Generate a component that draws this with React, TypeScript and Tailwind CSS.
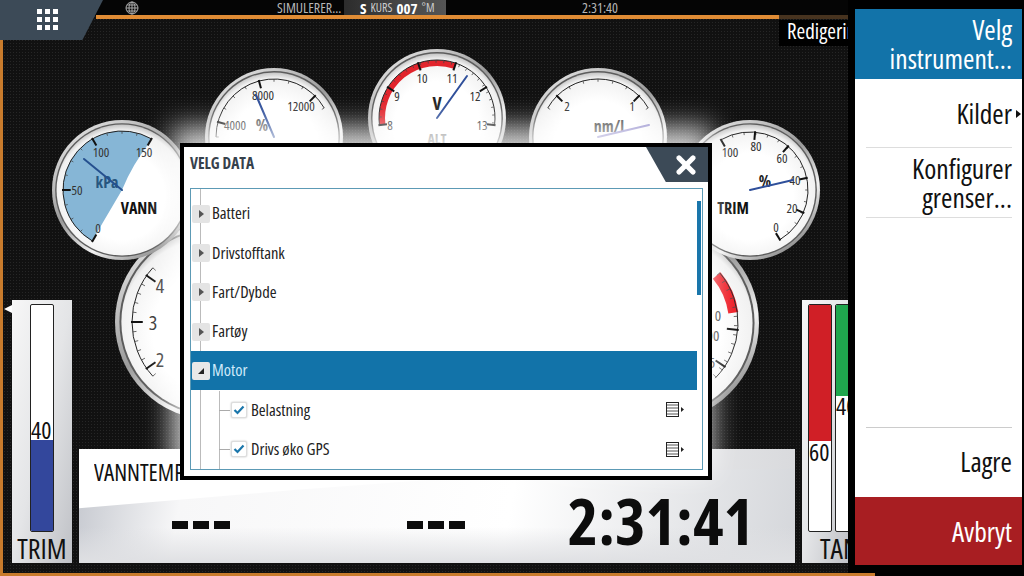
import React from "react";
import { X } from "lucide-react";

const polar = (cx: number, cy: number, r: number, deg: number): [number, number] => {
    const rad = (deg * Math.PI) / 180;
    return [cx + r * Math.sin(rad), cy - r * Math.cos(rad)];
};

const arcPath = (cx: number, cy: number, r: number, from: number, to: number): string => {
    const [x1, y1] = polar(cx, cy, r, from);
    const [x2, y2] = polar(cx, cy, r, to);
    return `M${x1} ${y1}A${r} ${r} 0 ${to - from > 180 ? 1 : 0} 1 ${x2} ${y2}`;
};

interface Label {
    x: number;
    y: number;
    text: string;
    size?: number;
    bold?: boolean;
    fill?: string;
}

interface GaugeProps {
    id: string;
    className: string;
    cx: number;
    cy: number;
    r: number;
    ring: number;
    from: number;
    to: number;
    majors: number[];
    step: number;
    labels: Label[];
    needle?: [number, number];
    needleColor?: string;
    children?: React.ReactNode;
}

function Gauge({ id, className, cx, cy, r, ring, from, to, majors, step, labels, needle, needleColor = "#2f4f9a", children }: GaugeProps) {
    const minors: number[] = [];
    for (let a = from; a <= to; a += step) minors.push(a);
    return (
        <svg
            className={`absolute ${className}`}
            width={r * 2}
            height={r * 2}
            viewBox={`${cx - r} ${cy - r} ${r * 2} ${r * 2}`}
        >
            <defs>
                <linearGradient id={`${id}-bezel`} x1="0.15" y1="0" x2="0.85" y2="1">
                    <stop offset="0" stopColor="#e8e8e8" />
                    <stop offset="0.45" stopColor="#9a9a9a" />
                    <stop offset="0.7" stopColor="#f2f2f2" />
                    <stop offset="1" stopColor="#6c6c6c" />
                </linearGradient>
                <radialGradient id={`${id}-face`} cx="0.5" cy="0.55" r="0.55">
                    <stop offset="0.6" stopColor="#ffffff" />
                    <stop offset="0.92" stopColor="#f1f1f1" />
                    <stop offset="1" stopColor="#c4c4c4" />
                </radialGradient>
            </defs>
            <circle cx={cx} cy={cy} r={r} fill={`url(#${id}-bezel)`} />
            <circle cx={cx} cy={cy} r={r * 0.955} fill="#5c5c5c" />
            <circle cx={cx} cy={cy} r={r * 0.935} fill={`url(#${id}-face)`} />
            {children}
            <path d={arcPath(cx, cy, ring, from, to)} fill="none" stroke="#222" strokeWidth="1" />
            {minors.map((a) => {
                const [x1, y1] = polar(cx, cy, ring, a);
                const [x2, y2] = polar(cx, cy, ring - r * 0.04, a);
                return <line key={a} x1={x1} y1={y1} x2={x2} y2={y2} stroke="#444" strokeWidth="0.8" />;
            })}
            {majors.map((a) => {
                const [x1, y1] = polar(cx, cy, ring + 1, a);
                const [x2, y2] = polar(cx, cy, ring - r * 0.11, a);
                return <line key={a} x1={x1} y1={y1} x2={x2} y2={y2} stroke="#111" strokeWidth="2" />;
            })}
            {labels.map((l) => (
                <text
                    key={l.text}
                    x={l.x}
                    y={l.y}
                    textAnchor="middle"
                    dominantBaseline="central"
                    fontSize={l.size ?? 13}
                    fontWeight={l.bold ? 700 : 400}
                    fill={l.fill ?? "#333"}
                    className="[font-stretch:condensed]"
                >
                    {l.text}
                </text>
            ))}
            {needle && (
                <line x1={cx} y1={cy} x2={needle[0]} y2={needle[1]} stroke={needleColor} strokeWidth="2" strokeLinecap="round" />
            )}
        </svg>
    );
}

function Gauges() {
    return (
        <>
            <Gauge id="big-left" className="left-[115px] top-[204px]" cx={213} cy={322} r={98} ring={81} from={-132} to={-48} majors={[-125, -90, -55]} step={7}
                labels={[
                    { x: 160, y: 285, text: "4", size: 20 },
                    { x: 153, y: 322, text: "3", size: 20 },
                    { x: 160, y: 359, text: "2", size: 20 },
                ]}
            />
            <Gauge id="big-right" className="left-[561px] top-[204px]" cx={660} cy={322} r={99} ring={78} from={50} to={135} majors={[95, 124]} step={7}
                labels={[
                    { x: 718, y: 314, text: "0", size: 15 },
                    { x: 713, y: 334, text: "00", size: 15 },
                    { x: 712, y: 361, text: "5", size: 15 },
                ]}
            >
                <path d={arcPath(660, 322, 74, 50, 82)} fill="none" stroke="#ee1c25" strokeWidth="10" />
            </Gauge>
            <Gauge id="vann" className="left-[52px] top-[100px]" cx={122} cy={190} r={70} ring={59} from={-150} to={30} majors={[-150, -90, -30, 30]} step={15}
                labels={[
                    { x: 101, y: 152, text: "100" },
                    { x: 144, y: 152, text: "150" },
                    { x: 77, y: 190, text: "50" },
                    { x: 98, y: 228, text: "0" },
                    { x: 107, y: 182, text: "kPa", size: 16, bold: true, fill: "#27567f" },
                    { x: 139, y: 208, text: "VANN", size: 16, bold: true, fill: "#111" },
                ]}
                needle={[84, 159]}
                needleColor="#25508f"
            >
                <path d="M122 190L92 241A59 59 0 0 1 152 139Q132 165 122 190Z" fill="#86b6d6" />
            </Gauge>
            <Gauge id="pct" className="left-[205px] top-[48px]" cx={274} cy={137} r={69} ring={58} from={-90} to={60} majors={[-75, -15, 45]} step={15}
                labels={[
                    { x: 235, y: 125, text: "4000" },
                    { x: 263, y: 95, text: "8000" },
                    { x: 301, y: 106, text: "12000" },
                    { x: 262, y: 125, text: "%", size: 16, bold: true, fill: "#555" },
                ]}
                needle={[256, 95]}
            />
            <Gauge id="volt" className="left-[368px] top-[29px]" cx={437} cy={118} r={69} ring={58} from={-97} to={97} majors={[-97, -58, -19, 19, 58, 97]} step={8}
                labels={[
                    { x: 390, y: 125, text: "8" },
                    { x: 397, y: 96, text: "9" },
                    { x: 422, y: 78, text: "10" },
                    { x: 452, y: 78, text: "11" },
                    { x: 475, y: 96, text: "12" },
                    { x: 482, y: 125, text: "13" },
                    { x: 437, y: 103, text: "V", size: 18, bold: true, fill: "#222" },
                    { x: 437, y: 138, text: "ALT", size: 14, bold: true, fill: "#777" },
                ]}
                needle={[467, 76]}
            >
                <path d={arcPath(437, 118, 55, -97, 19)} fill="none" stroke="#e2242c" strokeWidth="6" />
            </Gauge>
            <Gauge id="nml" className="left-[529px] top-[48px]" cx={598} cy={137} r={69} ring={58} from={-60} to={60} majors={[-45, 45]} step={15}
                labels={[
                    { x: 567, y: 106, text: "2" },
                    { x: 632, y: 106, text: "1" },
                    { x: 609, y: 126, text: "nm/l", size: 16, bold: true, fill: "#444" },
                ]}
                needle={[649, 125]}
                needleColor="#8d87c9"
            />
            <Gauge id="trim" className="left-[680px] top-[100px]" cx={750} cy={190} r={70} ring={58} from={-30} to={149} majors={[-30, 5, 41, 78, 113, 149]} step={12}
                labels={[
                    { x: 730, y: 152, text: "100" },
                    { x: 756, y: 146, text: "80" },
                    { x: 782, y: 158, text: "60" },
                    { x: 795, y: 180, text: "40" },
                    { x: 792, y: 208, text: "20" },
                    { x: 776, y: 227, text: "0" },
                    { x: 765, y: 181, text: "%", size: 16, bold: true, fill: "#222" },
                    { x: 733, y: 208, text: "TRIM", size: 16, bold: true, fill: "#111" },
                ]}
                needle={[793, 180]}
            />
        </>
    );
}

function TopBar() {
    return (
        <div className="relative h-5 shrink-0 text-[11px] leading-none">
            <div className="absolute left-0 top-0 w-[103px] h-10 z-10 bg-[#3c4a57] [clip-path:polygon(0_0,100%_0,80%_100%,0_100%)] flex items-center pl-[37px] pb-[1px]">
                <div className="grid grid-cols-3 gap-[3px]">
                    {[...Array(9)].map((_, i) => <span key={i} className="w-[5px] h-[5px] bg-white" />)}
                </div>
            </div>
            <div className="h-4 flex items-center pl-[125px] bg-[#050505]">
                <svg width="14" height="14" viewBox="0 0 14 14" fill="none" stroke="#aaa" strokeWidth="1">
                    <circle cx="7" cy="7" r="6" />
                    <ellipse cx="7" cy="7" rx="3" ry="6" />
                    <path d="M1 7h12M2 4h10M2 10h10M7 1v12" />
                </svg>
                <span className="ml-[138px] w-[67px] text-[#b5b5b5] text-[14px] whitespace-nowrap">SIMULERER...</span>
                <div className="w-[102px] h-4 bg-gradient-to-r from-[#2c2c2c] via-[#444] to-[#555] text-white flex items-center pl-4 gap-1">
                    <span className="font-bold text-[15px]">S</span>
                    <span className="text-[12px] text-[#ccc]">KURS</span>
                    <span className="font-bold text-[15px]">007</span>
                    <span className="text-[12px] text-[#ccc]">°M</span>
                </div>
                <span className="ml-[136px] text-[#b5b5b5] text-[14px]">2:31:40</span>
            </div>
            <div className="flex h-1 ml-[96px] -mt-[1px]">
                <div className="w-[683px] bg-[#e08c35]" />
                <div className="flex-1 bg-[#47331f]" />
            </div>
        </div>
    );
}

function BarPanel({ children, label, className, labelClass }: { children: React.ReactNode; label: string; className: string; labelClass: string }) {
    return (
        <div className={`relative h-[263px] shrink-0 overflow-hidden bg-gradient-to-br from-[#f7f7f7] via-[#e4e5e7] to-[#bfc1c6] ${className}`}>
            {children}
            <p className={`absolute left-0 right-0 bottom-0 text-[28px] leading-[30px] text-[#111] whitespace-nowrap ${labelClass}`}>{label}</p>
        </div>
    );
}

const Bar = ({ color, fillClass, valueClass, value, left }: { color: string; fillClass: string; valueClass: string; value: string; left: string }) => (
    <div className={`absolute top-[4px] h-[228px] w-[24px] border border-[#222] rounded-[2px] bg-white overflow-hidden ${left}`}>
        <div className={`absolute left-0 right-0 ${color} ${fillClass}`} />
        <span className={`absolute left-0 text-[24px] leading-6 text-[#111] ${valueClass}`}>{value}</span>
    </div>
);

function BottomRow() {
    return (
        <div className="relative mt-auto mb-[13px] flex gap-[7px] pl-[12px]">
            <div className="relative">
                <BarPanel label="TRIM" className="w-[60px]" labelClass="text-center">
                    <Bar color="bg-[#33479c]" fillClass="bottom-0 h-[91px]" valueClass="top-[113px]" value="40" left="left-[18px]" />
                </BarPanel>
                <div className="absolute -left-[8px] top-[5px] w-2 h-[8px] bg-white [clip-path:polygon(100%_0,100%_100%,0_50%)]" />
            </div>
            <div className="relative self-end w-[716px] h-[114px] overflow-hidden bg-gradient-to-r from-white via-white to-[#d9dadd]">
                <div className="absolute inset-0 bg-[linear-gradient(100deg,#c4c7ce_0%,#f7f7f8_15%,#ffffff_60%,#d5d7db_100%)] [clip-path:polygon(0_52%,30%_36%,60%_22%,100%_17%,100%_100%,0_100%)]" />
                <div className="absolute inset-x-0 bottom-0 h-[36px] bg-gradient-to-t from-[#dfe0e3] to-transparent" />
                <p className="absolute z-30 left-[15px] top-[9px] w-[86px] overflow-hidden whitespace-nowrap text-[23px] leading-7 text-[#111] [font-stretch:87.5%]">VANNTEMP</p>
                <div className="absolute left-[93px] top-[72px] flex gap-[5px]">
                    {[0, 1, 2].map((i) => <span key={i} className="w-4 h-2 bg-[#0c0c0c]" />)}
                </div>
                <div className="absolute left-[328px] top-[72px] flex gap-[5px]">
                    {[0, 1, 2].map((i) => <span key={i} className="w-4 h-2 bg-[#0c0c0c]" />)}
                </div>
                <p className="absolute right-[41px] top-[35px] text-[65px] leading-[72px] font-bold text-[#0c0c0c]">2:31:41</p>
            </div>
            <BarPanel label="TANK" className="w-[46px]" labelClass="pl-[18px]">
                <Bar color="bg-[#d01f26]" fillClass="top-0 h-[136px]" valueClass="top-[135px]" value="60" left="left-[6px]" />
                <Bar color="bg-[#1fa64e]" fillClass="top-0 h-[91px]" valueClass="top-[89px]" value="40" left="left-[33px]" />
            </BarPanel>
        </div>
    );
}

function Row({ label }: { label: string }) {
    return (
        <div className="h-[39.3px] flex items-center">
            <button className="w-[18px] h-[18px] ml-[1px] bg-[#e4e4e4] rounded-[2px] flex items-center justify-center">
                <span className="border-y-[4px] border-y-transparent border-l-[5px] border-l-[#555]" />
            </button>
            <span className="ml-[2px] text-[16.5px] text-[#222]">{label}</span>
        </div>
    );
}

function SubRow({ label }: { label: string }) {
    return (
        <div className="h-[39.3px] flex items-center relative">
            <span className="ml-[28px] w-[11px] h-px bg-[#aaa]" />
            <span className="ml-[1px] w-4 h-4 border border-[#ddd] rounded-[2px] shadow-[0_0_2px_#bbb] flex items-center justify-center bg-white">
                <svg width="12" height="10" viewBox="0 0 12 10" fill="none" stroke="#1a76ab" strokeWidth="2.2">
                    <path d="M1.5 5l3 3 6-6.5" />
                </svg>
            </span>
            <span className="ml-[4px] text-[16.5px] text-[#222]">{label}</span>
            <svg className="absolute left-[475px] top-[12px]" width="20" height="15" viewBox="0 0 20 15">
                <rect x="0.5" y="0.5" width="12" height="14" fill="#fff" stroke="#222" />
                <path d="M1 3h11M1 6h11M1 9h11M1 12h11" stroke="#555" />
                <path d="M15 5l3 2.5-3 2.5z" fill="#222" />
            </svg>
        </div>
    );
}

function Dialog() {
    return (
        <div className="absolute left-[180px] top-[143px] w-[532px] h-[337px] z-20 bg-white border-[4px] border-black shadow-[-4px_-12px_26px_4px_rgba(255,255,255,0.8)]">
            <div className="absolute right-0 top-0 w-[62px] h-[35px] bg-[#3c4a57] [clip-path:polygon(0_0,100%_0,100%_100%,32%_100%)] flex items-center justify-end pr-[8px]">
                <X size={28} strokeWidth={4.5} color="#fff" />
            </div>
            <p className="absolute left-[6px] top-[6px] text-[15.5px] leading-5 font-bold text-[#36414c]">VELG DATA</p>
            <div className="absolute left-[6px] top-[41px] w-[513px] h-[282px] border border-[#5c9ab5] overflow-hidden">
                <div className="absolute left-[9px] top-0 bottom-0 w-px bg-[#bbb]" />
                <div className="absolute left-[28px] top-[202px] bottom-0 w-px bg-[#bbb]" />
                <div className="absolute right-[1px] top-[12px] w-[4px] h-[94px] bg-[#1a76ab]" />
                <div className="relative pt-[5px]">
                    <Row label="Batteri" />
                    <Row label="Drivstofftank" />
                    <Row label="Fart/Dybde" />
                    <Row label="Fartøy" />
                    <div className="h-[39.3px] w-[506px] bg-[#1273a9] flex items-center">
                        <button className="w-[18px] h-[18px] ml-[1px] bg-[#e8e8e8] rounded-[2px] flex items-center justify-center">
                            <span className="w-0 h-0 border-b-[6px] border-b-[#222] border-l-[6px] border-l-transparent" />
                        </button>
                        <span className="ml-[2px] text-[16.5px] text-[#cfeafa]">Motor</span>
                    </div>
                    <SubRow label="Belastning" />
                    <SubRow label="Drivs øko GPS" />
                </div>
            </div>
        </div>
    );
}

function SidePanel() {
    return (
        <div className="mt-[9px] ml-[7px] w-[167px] h-[556px] flex flex-col text-right text-[27.5px] leading-[29px] text-[#111] bg-white">
            <div className="h-[70px] pt-[6px] pr-[10px] bg-[#1273a9] text-white whitespace-nowrap">Velg<br />instrument...</div>
            <div className="h-[69px] ml-[11px] mr-[10px] pt-[1px] flex items-center justify-end border-b border-[#ddd] relative">
                <span>Kilder</span>
                <span className="absolute -right-[9px] top-[31px] border-y-[4px] border-y-transparent border-l-[5px] border-l-[#111]" />
            </div>
            <div className="h-[70px] ml-[11px] mr-[10px] pt-[6px] border-b border-[#ddd]">Konfigurer<br />grenser...</div>
            <div className="flex-1" />
            <div className="h-[70px] ml-[11px] mr-[10px] pt-[19px] border-t border-[#ccc]">Lagre</div>
            <div className="h-[68px] pt-[20px] pr-[10px] bg-[#a81e22] text-white">Avbryt</div>
        </div>
    );
}

export default function App() {
    return (
        <div className="relative w-[1024px] h-[576px] overflow-hidden bg-black flex font-['Open_Sans',sans-serif] [font-stretch:condensed]">
            <div className="relative w-[848px] h-full shrink-0 flex flex-col overflow-hidden bg-[#111] bg-[radial-gradient(#262626_1px,transparent_1px)] bg-[length:3px_3px]">
                <TopBar />
                <div className="absolute left-0 top-10 bottom-0 w-[3px] bg-[#c87b2c]" />
                <div className="relative flex-1 flex flex-col">
                    <Gauges />
                    <BottomRow />
                </div>
                <div className="absolute top-[20px] right-0 w-[69px] h-[26px] bg-black text-white text-[21px] leading-[22px] pl-2 whitespace-nowrap overflow-hidden">Redigering</div>
            </div>
            <SidePanel />
            <Dialog />
            <div className="absolute left-0 bottom-0 w-[875px] h-[3px] bg-[#c87b2c]" />
        </div>
    );
}
